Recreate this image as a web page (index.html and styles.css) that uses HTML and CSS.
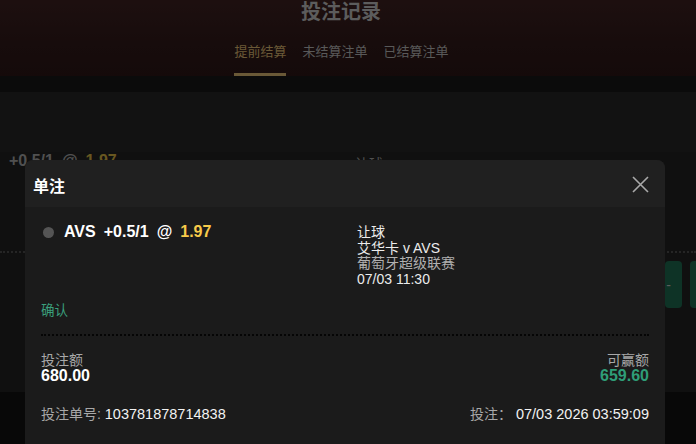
FILE: index.html
```html
<!DOCTYPE html>
<html lang="zh-CN">
<head>
  <meta charset="UTF-8">
  <title>投注记录</title>
  <link rel="stylesheet" href="styles.css">
</head>
<body>

  <!-- Page behind the dialog -->
  <header class="top">
    <h1>投注记录</h1>
    <nav class="tabs">
      <a class="tab active">提前结算</a>
      <a class="tab">未结算注单</a>
      <a class="tab">已结算注单</a>
    </nav>
  </header>
  <div class="band"></div>

  <main class="list">
    <div class="bet-card">
      <div class="bet-head">
        <div class="bet-pick">
          <span>+0.5/1</span>
          <span>@</span>
          <span class="bet-odds">1.97</span>
        </div>
        <div class="bet-market">让球</div>
      </div>
      <div class="bet-actions">
        <button class="cash-btn">-</button>
        <button class="cash-btn"></button>
      </div>
    </div>
  </main>
  <footer class="foot"></footer>

  <div class="mask"></div>

  <!-- Single bet dialog -->
  <div class="modal">
    <div class="modal-head">
      <span class="modal-title">单注</span>
      <svg class="close" width="17" height="17" viewBox="0 0 17 17">
        <path d="M1 1L16 16M16 1L1 16" stroke="#a9a9a9" stroke-width="1.6" fill="none"/>
      </svg>
    </div>
    <div class="modal-body">
      <div class="leg">
        <div class="pick">
          <span class="dot"></span>
          <span>AVS</span>
          <span>+0.5/1</span>
          <span>@</span>
          <span class="odds">1.97</span>
        </div>
        <div class="info">
          <div>让球</div>
          <div>艾华卡 v AVS</div>
          <div class="league">葡萄牙超级联赛</div>
          <div>07/03 11:30</div>
        </div>
      </div>
      <div class="status">确认</div>
      <div class="divider"></div>
      <div class="amounts">
        <div>
          <div class="label">投注额</div>
          <div class="value">680.00</div>
        </div>
        <div class="right">
          <div class="label">可赢额</div>
          <div class="value win">659.60</div>
        </div>
      </div>
      <div class="refs">
        <div><span class="label">投注单号:</span> <span class="ref">103781878714838</span></div>
        <div><span class="label">投注：</span> <span class="ref">07/03 2026 03:59:09</span></div>
      </div>
    </div>
  </div>

</body>
</html>
```

FILE: styles.css
```css
html, body {
  overflow: hidden;
}
body {
  margin: 0;
  width: 696px;
  height: 444px;
  background: #242424;
  font-family: "Liberation Sans", "Noto Sans CJK SC", sans-serif;
  color: #fff;
}

/* page header */
.top {
  height: 76px;
  background: linear-gradient(180deg, #3b1f1f 0%, #2e1818 60%, #2a1515 100%);
  text-align: center;
  box-sizing: border-box;
  padding: 0 14px 0 0;
}
.top h1 {
  margin: 0;
  font-size: 20px;
  line-height: 24px;
  color: #b8b8b8;
}
.tabs {
  display: flex;
  justify-content: center;
  gap: 16px;
  margin-top: 20px;
  padding-left: 1px;
}
.tab {
  font-size: 13px;
  line-height: 16px;
  color: #b2b2b2;
  padding-bottom: 13px;
  border-bottom: 3px solid transparent;
}
.tab.active {
  color: #d4b26e;
  border-bottom-color: #d4b26e;
}
.band {
  height: 16px;
  background: #161616;
}

/* list behind the dialog */
.list {
  height: 300px;
  padding-top: 60px;
  box-sizing: border-box;
}
.bet-card {
  background: #202020;
  height: 240px;
  overflow: hidden;
}
.bet-head {
  display: grid;
  grid-template-columns: 346px 1fr;
  align-items: start;
  padding: 0 9px;
}
.bet-pick {
  display: flex;
  gap: 8px;
  font-size: 16px;
  line-height: 18px;
  font-weight: bold;
  color: #a0a0a0;
}
.bet-odds {
  color: #d0ae40;
}
.bet-market {
  margin-top: 4px;
  font-size: 14px;
  line-height: 16px;
  color: #a0a0a0;
}
.bet-actions {
  margin-top: 79px;
  border-top: 2px dotted #4a4a4a;
  padding-top: 8px;
  display: grid;
  grid-template-columns: 1fr 17px 6px;
  column-gap: 8px;
}
.cash-btn {
  grid-column: 2;
  height: 47px;
  border: none;
  border-radius: 4px;
  background: #1c664c;
  color: #bbb;
  font-size: 14px;
  text-align: right;
  padding: 0 11px 0 0;
}
.cash-btn + .cash-btn {
  grid-column: 3;
  border-radius: 4px 0 0 4px;
}
.foot {
  height: 60px;
  background: #101010;
}

.mask {
  position: fixed;
  inset: 0;
  background: rgba(0, 0, 0, 0.5);
}

/* dialog */
.modal {
  position: fixed;
  left: 25px;
  top: 160px;
  width: 640px;
  height: 284px;
  border-radius: 8px 8px 0 0;
  overflow: hidden;
  background: #1b1b1b;
}
.modal-head {
  height: 47px;
  background: #202020;
  display: flex;
  align-items: center;
  justify-content: space-between;
  padding: 0 16px 0 8px;
}
.modal-title {
  font-size: 16px;
  font-weight: bold;
  color: #fff;
  margin-top: 2px;
}
.close {
  margin-top: 1px;
}
.modal-body {
  padding: 16px 16px 0 16px;
}
.leg {
  display: grid;
  grid-template-columns: 316px 1fr;
  align-items: start;
}
.pick {
  display: flex;
  align-items: center;
  gap: 8px;
  font-size: 16px;
  line-height: 18px;
  font-weight: bold;
  color: #fff;
}
.dot {
  width: 11px;
  height: 11px;
  border-radius: 50%;
  background: #555;
  margin: 0 2px 0 2px;
}
.odds {
  color: #f7ca4a;
}
.info {
  margin-top: 2px;
  font-size: 14px;
  line-height: 15.5px;
  color: #ececec;
}
.info .league {
  color: #b0b0b0;
}
.status {
  margin-top: 16px;
  font-size: 13.5px;
  line-height: 16px;
  color: #3a9f7b;
}
.divider {
  margin-top: 15px;
  border-top: 2px dotted #050505;
}
.amounts {
  display: flex;
  justify-content: space-between;
  margin-top: 16px;
}
.right {
  text-align: right;
}
.label {
  font-size: 14px;
  line-height: 16px;
  color: #a8a8a8;
}
.value {
  font-size: 16px;
  line-height: 16px;
  font-weight: bold;
  color: #fff;
}
.value.win {
  color: #2f9e78;
}
.refs {
  display: flex;
  justify-content: space-between;
  margin-top: 22px;
  font-size: 14px;
  line-height: 16px;
}
.ref {
  color: #f2f2f2;
  font-size: 14.5px;
}
```
